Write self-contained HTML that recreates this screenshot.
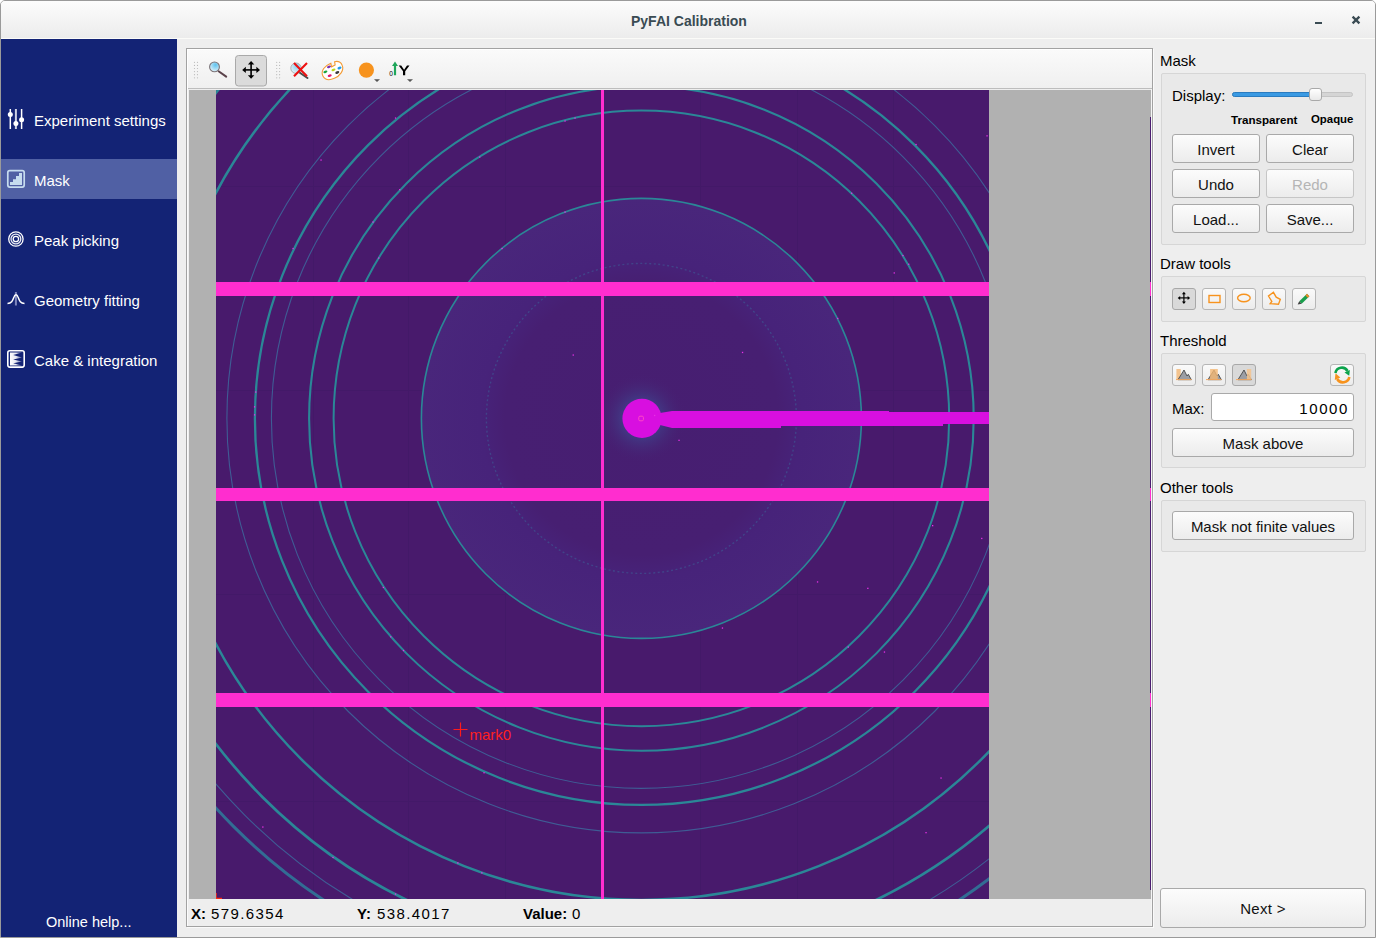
<!DOCTYPE html>
<html><head><meta charset="utf-8">
<style>
*{margin:0;padding:0;box-sizing:border-box}
html,body{width:1376px;height:938px;overflow:hidden;background:#ffffff}
body{position:relative;font-family:"Liberation Sans",sans-serif;font-size:15px;color:#000}
.a{position:absolute}
.t{position:absolute;white-space:nowrap;line-height:15px;font-size:15px}
#win{position:absolute;left:0;top:0;width:1376px;height:938px;background:#eeeeee;border:1px solid #9a9a9a;border-radius:5px 5px 0 0;overflow:hidden}
#title{position:absolute;left:1px;top:1px;width:1374px;height:37px;border-radius:4px 4px 0 0;background:linear-gradient(#fcfcfc,#ececec)}
#sidebar{position:absolute;left:1px;top:39px;width:176px;height:898px;background:#132375}
.side{color:#fff}
.btn{position:absolute;border:1px solid #a9a9a9;border-radius:3px;background:linear-gradient(#fcfcfc,#ececec);text-align:center;color:#111;padding-top:1px}
.grp{position:absolute;border:1px solid #d6d6d6;border-radius:2px;background:#e9e9e9}
.tb{position:absolute;width:24px;height:22px;border:1px solid #b6b6b6;border-radius:3px;background:linear-gradient(#fafafa,#ececec)}
.tb.on{background:#d9d9d9;border-color:#a8a8a8}
</style></head><body>
<div id="win"></div>
<div id="title"></div>
<div class="t" style="left:631px;top:14px;font-weight:bold;color:#3a4b53;font-size:14px">PyFAI Calibration</div>
<!-- min / close -->
<div class="a" style="left:1315px;top:22px;width:7px;height:2px;background:#3a4b53"></div>
<svg class="a" style="left:1350px;top:14px" width="12" height="12"><path d="M2.6 2.6 L9.4 9.4 M9.4 2.6 L2.6 9.4" stroke="#3a4b53" stroke-width="2.3"/></svg>
<div class="a" style="left:1px;top:38px;width:1374px;height:1px;background:#fbfbf8"></div>

<div id="sidebar"></div>
<div class="a" style="left:1px;top:159px;width:176px;height:40px;background:#5060a4"></div>
<div class="t side" style="left:34px;top:113px">Experiment settings</div>
<div class="t side" style="left:34px;top:173px">Mask</div>
<div class="t side" style="left:34px;top:233px">Peak picking</div>
<div class="t side" style="left:34px;top:293px">Geometry fitting</div>
<div class="t side" style="left:34px;top:353px">Cake &amp; integration</div>
<div class="t side" style="left:46px;top:915px;font-size:14.5px">Online help...</div>

<!-- plot frame -->
<div class="a" style="left:186px;top:48px;width:967px;height:879px;border:1px solid #a2a2a2;background:#eeeeee"></div>
<div class="a" style="left:187px;top:49px;width:965px;height:40px;background:linear-gradient(#fafafa,#efefef);border-top:1px solid #fff;border-left:1px solid #fff"></div>
<div class="a" style="left:188px;top:88px;width:964px;height:1px;background:#bdbdbd"></div>
<div class="a" style="left:189px;top:90px;width:962px;height:809px;background:#b1b1b1"></div>
<div class="a" style="left:187px;top:89px;width:1px;height:837px;background:#fbfbfb"></div>
<div class="a" style="left:1151px;top:89px;width:1px;height:837px;background:#f6f6f6"></div>
<div class="a" style="left:1153px;top:49px;width:1px;height:879px;background:#fafafa"></div>
<div class="a" style="left:187px;top:927px;width:967px;height:1px;background:#fafafa"></div>

<svg class="a" style="left:1150px;top:117px" width="1" height="782" viewBox="1150 117 1 782"><rect x="1150" y="117" width="1" height="773" fill="#4a1c70"/><g fill="#ff2dcf"><rect x="1150" y="282" width="1" height="14"/><rect x="1150" y="488" width="1" height="13"/><rect x="1150" y="693" width="1" height="14"/></g></svg>
<!-- image -->
<svg class="a" style="left:216px;top:90px" width="773" height="809" viewBox="216 90 773 809">
  <defs>
    <radialGradient id="inner" cx="641.4" cy="418.4" r="220" gradientUnits="userSpaceOnUse">
      <stop offset="0" stop-color="#471e71"/>
      <stop offset="0.62" stop-color="#471f72"/>
      <stop offset="0.73" stop-color="#47237a"/>
      <stop offset="1" stop-color="#49267b"/>
    </radialGradient>
    <radialGradient id="glow" cx="641.4" cy="418.4" r="45" gradientUnits="userSpaceOnUse">
      <stop offset="0.4" stop-color="#40428c" stop-opacity="0.75"/>
      <stop offset="1" stop-color="#471e71" stop-opacity="0"/>
    </radialGradient>
  </defs>
  <rect x="216" y="90" width="773" height="809" fill="#481a6c"/>
  <g fill="#3f1966" opacity="0.55"><rect x="313" y="90" width="1" height="809"/><rect x="408" y="90" width="1" height="809"/><rect x="505" y="90" width="1" height="809"/><rect x="700" y="90" width="1" height="809"/><rect x="797" y="90" width="1" height="809"/><rect x="893" y="90" width="1" height="809"/><rect x="216" y="186" width="773" height="1"/><rect x="216" y="390" width="773" height="1"/><rect x="216" y="594" width="773" height="1"/><rect x="216" y="801" width="773" height="1"/></g>
  <circle cx="641.4" cy="418.4" r="220" fill="url(#inner)"/>
  <circle cx="641.4" cy="418.4" r="45" fill="url(#glow)"/>
  <g fill="none">
    <circle cx="641.4" cy="418.4" r="155" stroke="#3d5a95" stroke-width="1.4" stroke-opacity="0.6" stroke-dasharray="2 2.5"/><circle cx="641.4" cy="418.4" r="220" stroke="#2b8797" stroke-width="1.6"/><circle cx="641.4" cy="418.4" r="307.8" stroke="#2b8797" stroke-width="2.0"/><circle cx="641.4" cy="418.4" r="332.3" stroke="#2b8797" stroke-width="2.1"/><circle cx="641.4" cy="418.4" r="370" stroke="#3a80aa" stroke-width="1.1" stroke-opacity="0.65"/><circle cx="641.4" cy="418.4" r="386.5" stroke="#2b8797" stroke-width="2.3"/><circle cx="641.4" cy="418.4" r="414.5" stroke="#3a80aa" stroke-width="1.1" stroke-opacity="0.65"/><circle cx="641.4" cy="418.4" r="481.5" stroke="#2b8797" stroke-width="2.5"/><circle cx="641.4" cy="418.4" r="535.7" stroke="#2b8797" stroke-width="2.7"/><circle cx="641.4" cy="418.4" r="561" stroke="#3a80aa" stroke-width="1.1" stroke-opacity="0.65"/><circle cx="641.4" cy="418.4" r="576.9" stroke="#307799" stroke-width="3.0" stroke-opacity="0.9"/>
  </g>
  <g fill="#ff2dcf">
    <rect x="216" y="282" width="773" height="14"/>
    <rect x="216" y="488" width="773" height="13"/>
    <rect x="216" y="693" width="773" height="14"/>
    <rect x="601" y="90" width="3" height="809"/>
  </g>
  <g fill="#d80fe0">
    <circle cx="642" cy="418.4" r="19.6"/>
    <polygon points="660,413 672,411 889,411 889,412 989,412 989,424 943,424 943,426 781,426 781,428 672,428 660,425"/>
  </g>
  <g fill="#e630e6"><rect x="320.4" y="159.4" width="1.3" height="1.3"/><rect x="394.9" y="117.4" width="1.3" height="1.3"/><rect x="399.1" y="189.0" width="1.3" height="1.3"/><rect x="372.4" y="221.4" width="1.3" height="1.3"/><rect x="378.1" y="257.4" width="1.3" height="1.3"/><rect x="479.1" y="156.4" width="1.3" height="1.3"/><rect x="564.4" y="120.4" width="1.3" height="1.3"/><rect x="574.4" y="117.4" width="1.3" height="1.3"/><rect x="564.4" y="211.4" width="1.3" height="1.3"/><rect x="501.4" y="247.9" width="1.3" height="1.3"/><rect x="292.4" y="247.9" width="1.3" height="1.3"/><rect x="382.7" y="586.8" width="1.3" height="1.3"/><rect x="816.9" y="581.3" width="1.3" height="1.3"/><rect x="867.2" y="587.7" width="1.3" height="1.3"/><rect x="847.6" y="646.4" width="1.3" height="1.3"/><rect x="883.8" y="651.4" width="1.3" height="1.3"/><rect x="721.8" y="627.4" width="1.3" height="1.3"/><rect x="932.0" y="525.0" width="1.3" height="1.3"/><rect x="981.1" y="537.8" width="1.3" height="1.3"/><rect x="940.4" y="777.4" width="1.3" height="1.3"/><rect x="925.4" y="832.0" width="1.3" height="1.3"/><rect x="572.6" y="354.4" width="1.3" height="1.3"/><rect x="741.9" y="351.8" width="1.3" height="1.3"/><rect x="678.4" y="439.7" width="1.3" height="1.3"/><rect x="654.0" y="414.8" width="1.3" height="1.3"/><rect x="390.1" y="636.2" width="1.3" height="1.3"/><rect x="402.9" y="649.9" width="1.3" height="1.3"/><rect x="262.2" y="826.4" width="1.3" height="1.3"/><rect x="332.4" y="856.8" width="1.3" height="1.3"/><rect x="394.9" y="893.4" width="1.3" height="1.3"/><rect x="483.4" y="772.1" width="1.3" height="1.3"/><rect x="481.2" y="872.2" width="1.3" height="1.3"/><rect x="457.2" y="862.3" width="1.3" height="1.3"/><rect x="986.4" y="135.2" width="1.3" height="1.3"/><rect x="915.4" y="143.9" width="1.3" height="1.3"/><rect x="851.0" y="192.6" width="1.3" height="1.3"/><rect x="893.6" y="272.3" width="1.3" height="1.3"/><rect x="908.1" y="263.6" width="1.3" height="1.3"/><rect x="902.3" y="254.9" width="1.3" height="1.3"/><rect x="837.1" y="317.8" width="1.3" height="1.3"/><rect x="253.9" y="406.2" width="1.3" height="1.3"/><rect x="253.9" y="414.2" width="1.3" height="1.3"/><rect x="255.1" y="391.4" width="1.3" height="1.3"/></g>
  <rect x="638.8" y="416.2" width="4.6" height="4.6" rx="1.2" fill="none" stroke="#ff45c8" stroke-width="1"/>
  <path d="M453.5 729.5 H467.5 M460.5 722.5 V736.5" stroke="#ff1a1a" stroke-width="1.2"/>
  <text x="469.5" y="740" font-family="Liberation Sans" font-size="15" fill="#ff2020">mark0</text>
  <path d="M216 893 V899 M211 898.5 H222" stroke="#ff2a10" stroke-width="1.5"/>
</svg>


<!-- sidebar icons -->
<svg class="a" style="left:0;top:100px" width="30" height="280" viewBox="0 100 30 280">
  <g stroke="#fff" stroke-width="1.5" fill="#fff">
    <line x1="10.3" y1="109" x2="10.3" y2="129"/>
    <line x1="21.6" y1="109" x2="21.6" y2="129"/>
    <line x1="15.9" y1="109" x2="15.9" y2="129" stroke="#cdd1e4" stroke-width="2"/>
    <circle cx="10.3" cy="114.6" r="2.5" stroke="none"/>
    <circle cx="15.9" cy="123.6" r="2.5" stroke="none"/>
    <circle cx="21.6" cy="119.7" r="2.5" stroke="none"/>
  </g>
  <rect x="7.8" y="170.7" width="16.4" height="16.4" rx="2" fill="none" stroke="#c6dcef" stroke-width="1.7"/>
  <path d="M10 185 V182 H13 V179.2 H16 V176.1 H19 V173 H22 V185 Z" fill="#c6dcef"/>
  <g fill="none" stroke="#fff" stroke-width="1.3">
    <circle cx="15.9" cy="239" r="7.2"/>
    <circle cx="15.9" cy="239" r="4.9" stroke="#e8eaf4"/>
    <circle cx="15.9" cy="239" r="2.7"/>
  </g>
  <line x1="15.9" y1="292" x2="15.9" y2="305.5" stroke="#7f88bf" stroke-width="2"/>
  <path d="M7.5 303.5 C11.5 303.5 12.5 301 14 297 C15 294 17 294 18 297 C19.5 301 20.5 303.5 24.5 303.5" fill="none" stroke="#fff" stroke-width="1.5"/>
  <rect x="7.8" y="350.7" width="16.4" height="16.4" rx="2" fill="none" stroke="#fff" stroke-width="1.6"/>
  <defs><linearGradient id="cg" x1="0" x2="1"><stop offset="0" stop-color="#fff"/><stop offset="0.5" stop-color="#fff" stop-opacity="0.9"/><stop offset="1" stop-color="#fff" stop-opacity="0.3"/></linearGradient></defs>
  <path d="M10 352.4 H22 L13.2 355 L22 357.6 L13.2 359.4 L22 361.6 L13.2 363.2 L22 365.6 H10 Z" fill="url(#cg)"/>
</svg>

<!-- toolbar icons -->
<svg class="a" style="left:187px;top:49px" width="240" height="39" viewBox="187 49 240 39">
  <g fill="#b9b9b9">
    <circle cx="194.5" cy="62.3" r="0.6"/><circle cx="197.5" cy="62.3" r="0.6"/>
    <circle cx="194.5" cy="65.4" r="0.6"/><circle cx="197.5" cy="65.4" r="0.6"/>
    <circle cx="194.5" cy="68.5" r="0.6"/><circle cx="197.5" cy="68.5" r="0.6"/>
    <circle cx="194.5" cy="71.6" r="0.6"/><circle cx="197.5" cy="71.6" r="0.6"/>
    <circle cx="194.5" cy="74.7" r="0.6"/><circle cx="197.5" cy="74.7" r="0.6"/>
    <circle cx="194.5" cy="77.8" r="0.6"/><circle cx="197.5" cy="77.8" r="0.6"/>
    <circle cx="276.7" cy="62.3" r="0.6"/><circle cx="279.6" cy="62.3" r="0.6"/>
    <circle cx="276.7" cy="65.4" r="0.6"/><circle cx="279.6" cy="65.4" r="0.6"/>
    <circle cx="276.7" cy="68.5" r="0.6"/><circle cx="279.6" cy="68.5" r="0.6"/>
    <circle cx="276.7" cy="71.6" r="0.6"/><circle cx="279.6" cy="71.6" r="0.6"/>
    <circle cx="276.7" cy="74.7" r="0.6"/><circle cx="279.6" cy="74.7" r="0.6"/>
    <circle cx="276.7" cy="77.8" r="0.6"/><circle cx="279.6" cy="77.8" r="0.6"/>
  </g>
  <defs>
    <radialGradient id="lens" cx="0.6" cy="0.3" r="0.8"><stop offset="0" stop-color="#5ec3ef"/><stop offset="1" stop-color="#f2f8fb"/></radialGradient>
  </defs>
  <line x1="218.6" y1="71.2" x2="226.2" y2="76.6" stroke="#5b434b" stroke-width="2" stroke-linecap="round"/>
  <circle cx="214.5" cy="66.9" r="4.9" fill="url(#lens)" stroke="#7b7377" stroke-width="1.1"/>
  <rect x="235.5" y="55.5" width="31" height="30.5" rx="3" fill="#dbdbdb" stroke="#a9a9a9"/>
  <g fill="#000">
    <rect x="250.3" y="63" width="1.6" height="14"/>
    <rect x="244" y="69.1" width="14" height="1.6"/>
    <path d="M251.1 61 L254.3 64.6 L247.9 64.6 Z"/>
    <path d="M251.1 78.8 L254.3 75.2 L247.9 75.2 Z"/>
    <path d="M242.2 69.9 L245.8 66.7 L245.8 73.1 Z"/>
    <path d="M260 69.9 L256.4 66.7 L256.4 73.1 Z"/>
  </g>
  <line x1="299.5" y1="72.5" x2="307.5" y2="78" stroke="#4a4a4a" stroke-width="2" stroke-linecap="round"/>
  <circle cx="296" cy="68.2" r="5.2" fill="url(#lens)" stroke="#9a9a9a" stroke-width="1" opacity="0.75"/>
  <path d="M294 63 L307 76.2 M307 63 L294 76.2" stroke="#ee1111" stroke-width="2.1"/>
  <g transform="translate(332.6,70.8) rotate(-28)">
    <path d="M-11 0 C-11 -6 -4 -8 2 -7.5 L1 -4 L5 -4 L6 -7 C10 -6.5 11.5 -3 11 0 C10.5 5 4 8 -2 7.5 C-8 7 -11 4 -11 0 Z" fill="#fff" stroke="#f39a33" stroke-width="1.1"/>
  </g>
  <ellipse cx="329" cy="66.8" rx="2.1" ry="1.2" fill="#7b2fb0" transform="rotate(-20 329 66.8)"/>
  <ellipse cx="339.5" cy="68" rx="2.1" ry="1.2" fill="#1f9be6" transform="rotate(-20 339.5 68)"/>
  <ellipse cx="333.5" cy="69.8" rx="2.1" ry="1.2" fill="#b9d61c" transform="rotate(-20 333.5 69.8)"/>
  <ellipse cx="325.4" cy="71.8" rx="2.1" ry="1.2" fill="#1ba33c" transform="rotate(-20 325.4 71.8)"/>
  <ellipse cx="337.3" cy="72.5" rx="2.1" ry="1.2" fill="#3a3a3a" transform="rotate(-20 337.3 72.5)"/>
  <ellipse cx="329.7" cy="75.6" rx="2.1" ry="1.2" fill="#e0156c" transform="rotate(-20 329.7 75.6)"/>
  <circle cx="366.4" cy="70.1" r="7.6" fill="#f7931e"/>
  <path d="M374 79.2 H380 L377 82 Z" fill="#555"/>
  <path d="M395 61.6 L398 66 H396.1 V75.2 H393.9 V66 H392 Z" fill="#1fa65a"/>
  <text x="389.3" y="75.5" font-family="Liberation Sans" font-size="6.5" fill="#000">0</text>
  <path d="M398.7 65.6 H401.2 L404.1 69.8 L407 65.6 H409.5 L405.2 71.3 V75.2 H403 V71.3 Z" fill="#000"/>
  <path d="M407 79.2 H413 L410 82 Z" fill="#555"/>
</svg>




<!-- status -->
<div class="t" style="left:191px;top:906px;font-weight:bold">X:</div>
<div class="t" style="left:211px;top:906px;letter-spacing:1.4px">579.6354</div>
<div class="t" style="left:357px;top:906px;font-weight:bold">Y:</div>
<div class="t" style="left:377px;top:906px;letter-spacing:1.4px">538.4017</div>
<div class="t" style="left:523px;top:906px;font-weight:bold">Value:</div>
<div class="t" style="left:572px;top:906px">0</div>

<!-- right panel -->
<div class="t" style="left:1160px;top:53px">Mask</div>
<div class="grp" style="left:1161px;top:73px;width:205px;height:172px"></div>
<div class="t" style="left:1172px;top:88px">Display:</div>
<div class="a" style="left:1232px;top:92px;width:121px;height:5px;border-radius:3px;background:#d5d5d5;border:1px solid #c4c4c4"></div>
<div class="a" style="left:1232px;top:92px;width:82px;height:5px;border-radius:3px;background:#3a9ae3;border:1px solid #2a7cc0"></div>
<div class="a" style="left:1309px;top:88px;width:13px;height:13px;border-radius:3px;background:linear-gradient(#ffffff,#e9e9e9);border:1px solid #a9a9a9"></div>
<div class="t" style="left:1231px;top:112px;font-size:11.6px;font-weight:bold">Transparent</div>
<div class="t" style="left:1311px;top:112px;font-size:11.4px;font-weight:bold">Opaque</div>
<div class="btn" style="left:1172px;top:134px;width:88px;height:29px;line-height:27px">Invert</div>
<div class="btn" style="left:1266px;top:134px;width:88px;height:29px;line-height:27px">Clear</div>
<div class="btn" style="left:1172px;top:169px;width:88px;height:29px;line-height:27px">Undo</div>
<div class="btn" style="left:1266px;top:169px;width:88px;height:29px;line-height:27px;color:#b5b5b5;border-color:#c6c6c6">Redo</div>
<div class="btn" style="left:1172px;top:204px;width:88px;height:29px;line-height:27px">Load...</div>
<div class="btn" style="left:1266px;top:204px;width:88px;height:29px;line-height:27px">Save...</div>

<div class="t" style="left:1160px;top:256px">Draw tools</div>
<div class="grp" style="left:1161px;top:276px;width:205px;height:46px"></div>
<div class="tb on" style="left:1172px;top:288px"></div>
<div class="tb" style="left:1202px;top:288px"></div>
<div class="tb" style="left:1232px;top:288px"></div>
<div class="tb" style="left:1262px;top:288px"></div>
<div class="tb" style="left:1292px;top:288px"></div>

<div class="t" style="left:1160px;top:333px">Threshold</div>
<div class="grp" style="left:1161px;top:353px;width:205px;height:115px"></div>
<div class="tb" style="left:1172px;top:364px"></div>
<div class="tb" style="left:1202px;top:364px"></div>
<div class="tb on" style="left:1232px;top:364px"></div>
<div class="tb" style="left:1330px;top:364px"></div>
<div class="t" style="left:1172px;top:401px">Max:</div>
<div class="a" style="left:1211px;top:393px;width:143px;height:28px;background:#fff;border:1px solid #a9a9a9;border-radius:3px"></div>
<div class="t" style="left:1280px;top:401px;width:69px;text-align:right;letter-spacing:1.6px">10000</div>
<div class="btn" style="left:1172px;top:428px;width:182px;height:29px;line-height:27px">Mask above</div>

<div class="t" style="left:1160px;top:480px">Other tools</div>
<div class="grp" style="left:1161px;top:500px;width:205px;height:52px"></div>
<div class="btn" style="left:1172px;top:511px;width:182px;height:29px;line-height:27px">Mask not finite values</div>

<div class="btn" style="left:1160px;top:888px;width:206px;height:40px;line-height:38px;letter-spacing:0.3px">Next &gt;</div>
<!-- panel icons -->
<svg class="a" style="left:1160px;top:280px" width="200" height="110" viewBox="1160 280 200 110">
  <g fill="#000">
    <rect x="1183.3" y="293" width="1.2" height="10"/>
    <rect x="1179" y="297.3" width="10" height="1.2"/>
    <path d="M1183.9 291.8 L1185.9 294.3 H1181.9 Z"/>
    <path d="M1183.9 304 L1185.9 301.5 H1181.9 Z"/>
    <path d="M1177.7 297.9 L1180.2 295.9 V299.9 Z"/>
    <path d="M1190.1 297.9 L1187.6 295.9 V299.9 Z"/>
  </g>
  <g fill="none" stroke="#f7931e" stroke-width="1.4">
    <rect x="1209" y="295.5" width="11" height="7"/>
    <ellipse cx="1243.9" cy="298" rx="6.3" ry="3.7"/>
    <path d="M1273.4 292.3 L1268.5 296 L1271.8 301.5 L1270.2 303.6 L1278.5 304.2 L1280.3 299.4 L1276.2 297.2 Z"/>
  </g>
  <path d="M1299.3 301.3 L1307 293.8 L1309.4 296.2 L1301.7 303.7 Z" fill="#1a9e4c"/>
  <path d="M1305.4 295.4 L1307 293.8 L1309.4 296.2 L1307.8 297.8 Z" fill="#f08a2a"/>
  <path d="M1297.6 304.5 L1299.3 301.3 L1301.7 303.7 Z" fill="#444"/>
  <!-- threshold -->
  <g>
    <rect x="1176.4" y="369" width="4.3" height="10.7" fill="#f3c38e"/>
    <path d="M1178 379.7 L1184 370 L1187 376 L1188.3 374.3 L1191.3 379.7 Z" fill="#9c9ea4" stroke="#3a3a3a" stroke-width="0.8"/>
    <line x1="1176" y1="379.6" x2="1191.5" y2="379.6" stroke="#f3a860" stroke-width="1"/>
    <path d="M1208 379.7 L1214 370 L1217 376 L1218.3 374.3 L1221.3 379.7 Z" fill="#9c9ea4" stroke="#3a3a3a" stroke-width="0.8"/>
    <rect x="1210.1" y="369" width="7.7" height="10.7" fill="#f3b673" opacity="0.8"/>
    <line x1="1206" y1="379.6" x2="1221.5" y2="379.6" stroke="#f3a860" stroke-width="1"/>
    <path d="M1238 379.7 L1244 370 L1247 376 L1248.3 374.3 L1251.3 379.7 Z" fill="#9c9ea4" stroke="#3a3a3a" stroke-width="0.8"/>
    <rect x="1246.9" y="369" width="4.3" height="10.7" fill="#f3c38e" opacity="0.85"/>
    <line x1="1236" y1="379.6" x2="1251.5" y2="379.6" stroke="#f3a860" stroke-width="1"/>
  </g>
  <path d="M1335.4 373 A6.5 6.5 0 0 1 1347.5 371" fill="none" stroke="#0ca34c" stroke-width="2.6"/>
  <path d="M1344.5 372.5 L1349.9 370 L1349.2 375.7 Z" fill="#0ca34c"/>
  <path d="M1349.3 377 A6.5 6.5 0 0 1 1337.2 379" fill="none" stroke="#f7931e" stroke-width="2.6"/>
  <path d="M1340.3 377.4 L1334.8 380 L1335.5 373.3 Z" fill="#f7931e"/>
</svg>
</body></html>
